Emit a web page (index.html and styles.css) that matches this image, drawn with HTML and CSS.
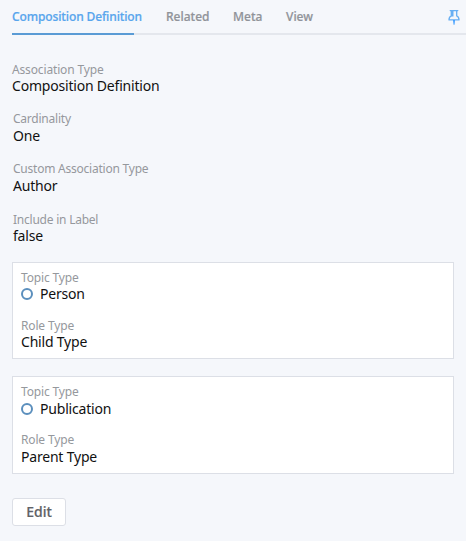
FILE: index.html
```html
<!DOCTYPE html>
<html lang="en">
<head>
<meta charset="utf-8">
<title>Composition Definition</title>
<link rel="stylesheet" href="styles.css">
</head>
<body>
<nav class="tabs">
  <a class="tab active"><span>Composition Definition</span></a>
  <a class="tab related"><span>Related</span></a>
  <a class="tab meta"><span>Meta</span></a>
  <a class="tab view"><span>View</span></a>
  <svg class="pin" width="12" height="16" viewBox="0 0 12 16">
    <path d="M2.2 1.600h7.600M3.300 2v4.800C1.700 7.400 1 8.500 1 10.900h10C11 8.500 10.300 7.400 8.700 6.800V2" fill="none" stroke="#68aff3" stroke-width="1.300" stroke-linejoin="round" stroke-linecap="round"/>
    <path d="M3.300 2h2.200v5.500H3.300z" fill="#68aff3"/>
    <path d="M5 11h2L6.500 15.800h-.9z" fill="#409eff"/>
  </svg>
</nav>
<main class="details">
  <section class="field"><div class="label">Association Type</div><div class="value">Composition Definition</div></section>
  <section class="field inset"><div class="label">Cardinality</div><div class="value">One</div></section>
  <section class="field inset"><div class="label">Custom Association Type</div><div class="value">Author</div></section>
  <section class="field inset last"><div class="label">Include in Label</div><div class="value">false</div></section>
  <section class="card">
    <div class="field"><div class="label">Topic Type</div><div class="value topic"><i class="ring"></i><span>Person</span></div></div>
    <div class="field"><div class="label">Role Type</div><div class="value">Child Type</div></div>
  </section>
  <section class="card tall">
    <div class="field"><div class="label">Topic Type</div><div class="value topic"><i class="ring"></i><span>Publication</span></div></div>
    <div class="field"><div class="label">Role Type</div><div class="value">Parent Type</div></div>
  </section>
  <button class="edit">Edit</button>
</main>
</body>
</html>
```
FILE: styles.css
```css
* { box-sizing: border-box; }
body {
  margin: 0;
  height: 541px;
  overflow: hidden;
  background: #f5f7fb;
  color: #111;
  font-family: "Noto Sans", sans-serif;
}
.tabs {
  display: flex;
  height: 35px;
  margin-left: 12px;
  border-bottom: 2px solid #e4e7ed;
  font-size: 12px;
  font-weight: 500;
  line-height: 33px;
  color: #909399;
  white-space: nowrap;
}
.tab { height: 35px; letter-spacing: 0; -webkit-text-stroke: 0.2px; }
.active {
  width: 122px;
  margin-right: 32px;
  letter-spacing: -0.12px;
  color: #57a5ed;
  border-bottom: 2px solid #5a9bd5;
}
.related { width: 67px; }
.meta { width: 53px; }
.pin { margin: 9px 6px 0 auto; }
.details { padding: 27px 12px 0; }
.field { margin-bottom: 16px; }
.label { height: 15px; line-height: 16px; font-size: 12px; letter-spacing: -0.15px; color: #95989d; }
.value { height: 18px; line-height: 18px; font-size: 14px; letter-spacing: -0.2px; }
.inset { padding-left: 1px; }
.inset .label { letter-spacing: -0.23px; }
.inset .value { height: 19px; line-height: 20px; }
.last { margin-bottom: 17px; }
.last .label { padding-top: 1px; height: 16px; }
.last .value { height: 18px; line-height: 18px; }
.topic { display: flex; align-items: center; gap: 7px; }
.ring { width: 12px; height: 12px; border: 2px solid #5b8fbd; border-radius: 50%; }
.card {
  height: 97px;
  margin-bottom: 17px;
  padding: 7px 8px;
  background: #fff;
  border: 1px solid #dcdfe6;
}
.card .field { margin-bottom: 15px; }
.tall { height: 98px; }
.tall .label { height: 16px; }
.tall .field { margin-bottom: 14px; }
.edit {
  display: block;
  width: 54px;
  height: 28px;
  margin-top: 24px;
  padding: 0;
  border: 1px solid #dcdfe6;
  border-radius: 3px;
  background: #fff;
  color: #606266;
  font: 500 14px/26px "Noto Sans", sans-serif;
  -webkit-text-stroke: 0.2px;
}
```
